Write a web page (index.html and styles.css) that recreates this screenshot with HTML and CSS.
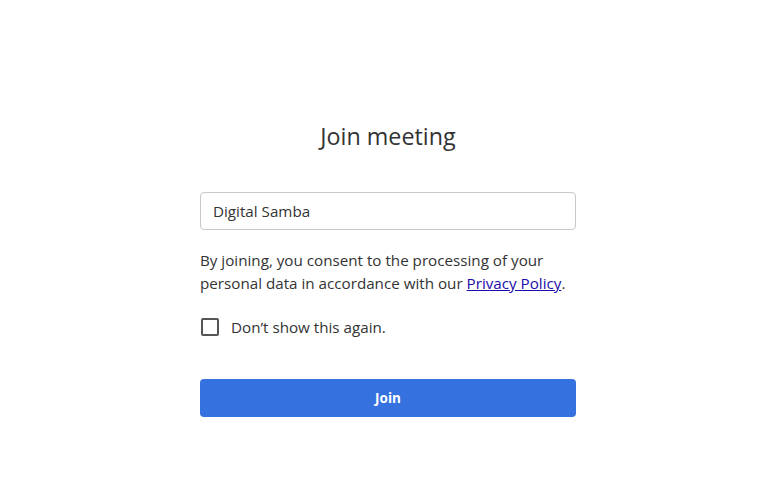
FILE: index.html
```html
<!DOCTYPE html>
<html lang="en">
<head>
	<meta charset="UTF-8">
	<title>Join meeting</title>
	<link rel="stylesheet" href="styles.css">
</head>
<body>
	<div class="page">
		<form class="join">
			<h1 class="join-title">Join meeting</h1>
			<input class="join-name" type="text" value="Digital Samba">
			<p class="join-consent">By joining, you consent to the processing of your personal data in accordance with our <a href="#">Privacy Policy</a>.</p>
			<label class="join-check">
				<span class="box"></span>
				<span>Don&#8217;t show this again.</span>
			</label>
			<button class="join-btn" type="button">Join</button>
		</form>
	</div>
</body>
</html>
```

FILE: styles.css
```css
*{
	margin: 0;
	padding: 0;
	box-sizing: border-box;
}
html,body{
	height: 100%;
}
body{
	background-color: #fff;
	font-family: "Open Sans", "Noto Sans", sans-serif;
	color: #333;
}
.page{
	display: flex;
	justify-content: center;
	padding-top: 118px;
	padding-right: 4px;
}
.join{
	width: 376px;
	display: flex;
	flex-direction: column;
}
.join-title{
	font-size: 23.3px;
	font-weight: 400;
	text-align: center;
	color: #333;
	line-height: 36px;
}
.join-name{
	margin-top: 38px;
	height: 38px;
	border: 1px solid #c8c8c8;
	border-radius: 4px;
	padding: 0 12px;
	font-family: inherit;
	font-size: 15.2px;
	color: #333;
	outline: none;
}
.join-consent{
	margin-top: 19px;
	font-size: 15.2px;
	line-height: 23px;
	color: #333;
}
.join-consent a{
	color: #1a0dab;
	text-decoration: underline;
}
.join-check{
	margin-top: 22px;
	display: flex;
	align-items: center;
	gap: 12px;
	font-size: 15.2px;
	line-height: 20px;
	color: #333;
}
.join-check .box{
	width: 18px;
	height: 18px;
	border: 2px solid #555;
	border-radius: 2px;
	margin-left: 1px;
}
.join-btn{
	margin-top: 42px;
	height: 38px;
	border: 0;
	border-radius: 4px;
	background-color: #3571df;
	color: #fff;
	font-family: inherit;
	font-size: 13.5px;
	font-weight: 700;
}
```
